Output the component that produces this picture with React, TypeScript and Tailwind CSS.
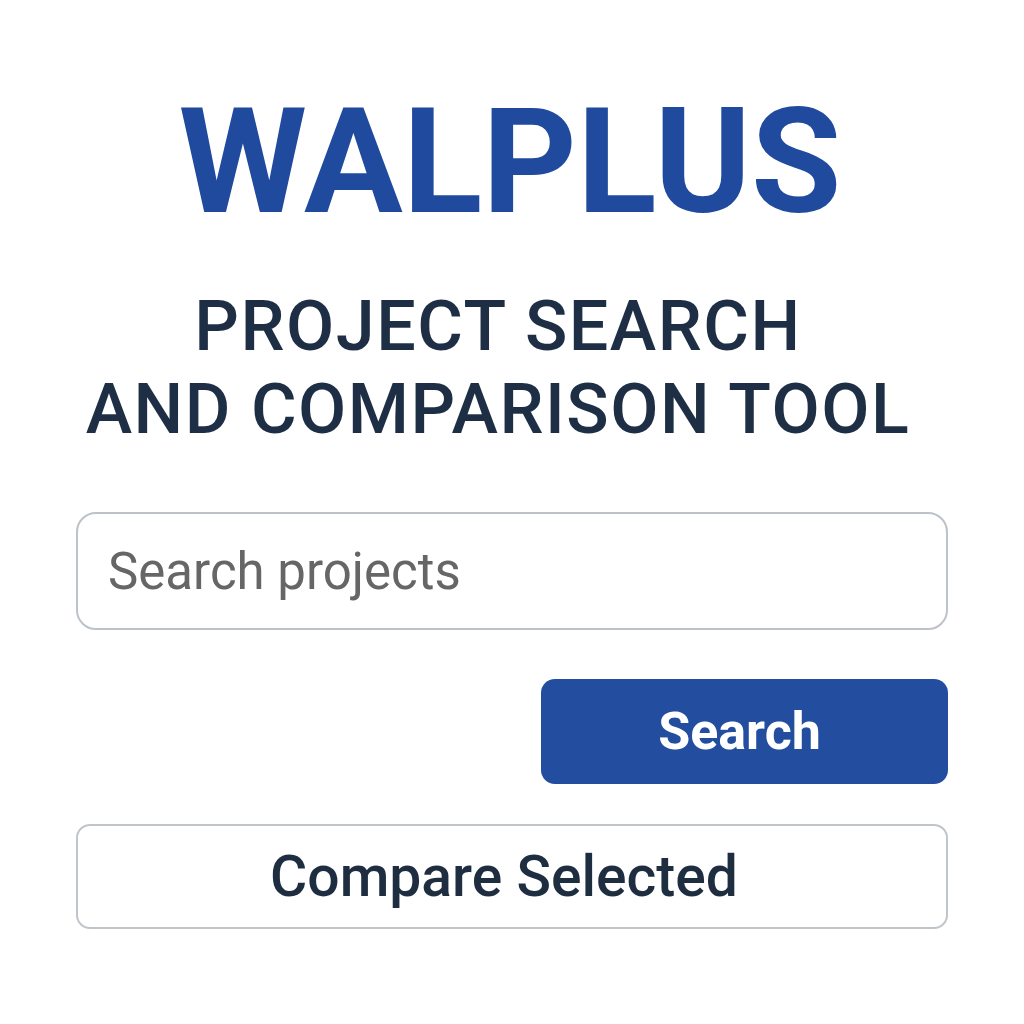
export default function App() {
  return (
    <div className="flex min-h-[1024px] w-[1024px] flex-col bg-white px-[76px] pt-[89px] font-['Roboto',Arial,sans-serif]">
      {/* Brand */}
      <h1 className="pr-[4px] text-center text-[147px] font-bold leading-none text-[#1f4a9e]">
        WALPLUS
      </h1>

      {/* Subtitle */}
      <h2 className="mt-[49px] pr-[28px] text-center text-[70px] font-medium leading-[83px] tracking-[1.5px] text-[#1e2f45]">
        PROJECT SEARCH
        <br />
        AND COMPARISON TOOL
      </h2>

      {/* Search box */}
      <input
        placeholder="Search projects"
        className="mt-[61px] h-[118px] w-full rounded-[20px] border-2 border-[#bcc2c8] bg-white px-[30px] text-[51px] text-[#333] outline-none placeholder:text-[#666]"
      />

      <div className="mt-[49px] flex justify-end">
        <button className="h-[105px] w-[407px] rounded-[14px] bg-[#234ea0] pr-[10px] text-[52px] font-bold text-white">
          Search
        </button>
      </div>

      <button className="mt-[40px] h-[105px] w-full rounded-[14px] border-2 border-[#c0c5ca] bg-white pr-[16px] text-[57px] font-medium text-[#1e2d40]">
        Compare Selected
      </button>
    </div>
  );
}
